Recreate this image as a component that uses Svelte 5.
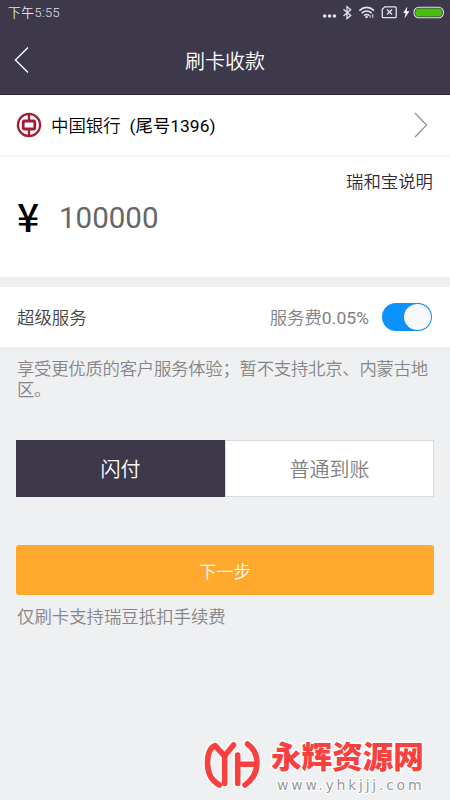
<script>
    const time = "下午5:55";
    const bank = { name: "中国银行", tail: "1396" };
    const payTypes = ["闪付", "普通到账"];

    let amount = $state("100000");
    let superService = $state(true);
    let currentType = $state(0);
</script>

<div class="page">
    <header>
        <div class="status-bar">
            <span class="time">{time}</span>
            <svg class="status-icons" width="128" height="24" viewBox="0 0 128 24" fill="none" stroke="#e4e3ec">
                <g fill="#e4e3ec" stroke="none">
                    <circle cx="5.7" cy="16" r="1.8" />
                    <circle cx="10.6" cy="16" r="1.8" />
                    <circle cx="15.4" cy="16" r="1.8" />
                </g>
                <path d="M24.5 9.3l7.2 6.3-3.7 3V6.6l3.7 3.1-7.2 6.2" stroke-width="1.3" />
                <path d="M40.3 10.7q7.4-6.5 14.8 0M42.7 13.2q5-4.4 10 0M45.1 15.6q2.6-2.2 5.2 0" stroke-width="1.6" />
                <circle cx="47.6" cy="17" r="1.2" fill="#e4e3ec" stroke="none" />
                <path d="M51.2 17.8v-2.6M53.8 14v3.8" stroke-width="1" />
                <path d="M65.8 6.8h10.4q1 0 1 1v8.9q0 1-1 1H64.3q-1 0-1-1V9.2z" stroke-width="1.3" />
                <path d="M68 9.6l5 5M73 9.6l-5 5" stroke-width="1.4" />
                <path d="M88.3 6.5l-4 6.6h2.4l-1.3 5.4 5.1-7.2h-2.8z" fill="#fff" stroke="none" />
                <rect x="95" y="7.2" width="29.4" height="10.6" rx="4.8" stroke-width="1.1" />
                <rect x="96.4" y="8.5" width="26.6" height="8" rx="3.6" fill="#48bd0b" stroke="none" />
            </svg>
        </div>
        <div class="title-bar">
            <svg class="back" width="16" height="28" viewBox="0 0 16 28" fill="none" stroke="#fff" stroke-width="1.3">
                <path d="M14 1.5L1.4 14 14 26.5" />
            </svg>
            <h1>刷卡收款</h1>
        </div>
    </header>

    <div class="bank-row">
        <svg width="26" height="26" viewBox="0 0 26 26" fill="none" stroke="#a51c35">
            <circle cx="13" cy="13" r="11.1" stroke-width="2.2" />
            <path d="M13 2v6.8M13 17.2V24" stroke-width="2.4" />
            <rect x="7.2" y="9" width="11.6" height="8" rx="1.5" stroke-width="2.8" />
        </svg>
        <span class="bank-name">{bank.name}</span>
        <span class="bank-tail">(尾号{bank.tail})</span>
        <svg class="arrow" width="14" height="26" viewBox="0 0 14 26" fill="none" stroke="#8b8b8b" stroke-width="1.1">
            <path d="M1 1l11.6 12L1 25" />
        </svg>
    </div>

    <div class="amount-box">
        <div class="explain">瑞和宝说明</div>
        <div class="amount">
            <span class="currency">¥</span>
            <span class="number">{amount}</span>
        </div>
    </div>

    <div class="service-row">
        <span class="service-name">超级服务</span>
        <span class="fee">服务费<span class="rate">0.05%</span></span>
        <button
            class="switch"
            class:on={superService}
            aria-label="超级服务"
            onclick={() => (superService = !superService)}
        >
            <span class="knob"></span>
        </button>
    </div>
    <p class="tip service-tip">享受更优质的客户服务体验；暂不支持北京、内蒙古地区。</p>

    <div class="pay-types">
        {#each payTypes as type, i}
            <button class:active={currentType === i} onclick={() => (currentType = i)}>
                {type}
            </button>
        {/each}
    </div>

    <button class="next">下一步</button>
    <p class="tip">仅刷卡支持瑞豆抵扣手续费</p>

    <div class="watermark">
        <svg width="60" height="58" viewBox="0 0 60 58" fill="none">
            {#each [{ color: "#fff", width: 8.5 }, { color: "#f8413f", width: 5.6 }] as line}
                <g stroke={line.color} stroke-width={line.width} stroke-linecap="round" stroke-linejoin="round">
                    <path d="M18.5 50C10 45.5 6.5 37.5 6.5 28 6.5 19 9.5 12.5 14 10.5L23.5 21 32.5 10" />
                    <path d="M23.7 21v27.5M36.7 20v28.5M37 29.2h18" />
                    <path d="M46.5 9C53 13.5 56.3 20.5 55.9 29 55.5 38 50.5 45.5 44 50" />
                </g>
            {/each}
        </svg>
        <div class="site">
            <div class="site-name">永辉资源网</div>
            <div class="site-url">www.yhkjjj.com</div>
        </div>
    </div>
</div>

<style>
    :global(body) {
        margin: 0;
    }

    .page {
        position: relative;
        display: flex;
        flex-direction: column;
        height: 800px;
        overflow: hidden;
        background: #eff0f2;
        font-family: Roboto, "Noto Sans CJK SC", sans-serif;
        font-size: 17.4px;
        font-weight: 350;
    }

    button {
        padding: 0;
        border: none;
        font: inherit;
    }

    header {
        box-sizing: border-box;
        height: 95px;
        background: #3d394b;
        border-bottom: 1px solid #2c2532;
        color: #fff;
    }

    .status-bar {
        display: flex;
        justify-content: space-between;
        height: 26px;
        padding: 0 3px 0 8px;
    }

    .time {
        font-size: 12.8px;
        letter-spacing: 0.4px;
        line-height: 26px;
        color: #e4e3ec;
    }

    .title-bar {
        display: grid;
        grid-template-columns: 40px 1fr 40px;
        align-items: center;
        height: 68px;
    }

    .back {
        margin-left: 14px;
    }

    h1 {
        margin: 0;
        text-align: center;
        font-size: 20px;
        font-weight: 350;
    }

    .bank-row {
        display: flex;
        align-items: center;
        box-sizing: border-box;
        height: 62px;
        padding: 0 22px 0 16px;
        background: #fff;
        border-bottom: 2px solid #f5f5f5;
        color: #000;
    }

    .bank-name {
        margin-left: 9px;
        padding-bottom: 2px;
    }

    .bank-tail {
        margin-left: 9px;
        padding-bottom: 2px;
        font-weight: 400;
    }

    .arrow {
        margin-left: auto;
    }

    .amount-box {
        box-sizing: border-box;
        height: 120px;
        padding: 12px 17px 0;
        background: #fff;
    }

    .explain {
        line-height: 26px;
        text-align: right;
        color: #2d2938;
    }

    .amount {
        display: flex;
        align-items: center;
        height: 46px;
    }

    .currency {
        width: 42px;
        padding-bottom: 6px;
        font-family: "Noto Sans CJK SC", sans-serif;
        font-size: 39px;
        line-height: 46px;
        font-weight: 500;
        color: #000;
    }

    .number {
        font-size: 29.5px;
        font-weight: 400;
        color: #666;
    }

    .service-row {
        display: flex;
        align-items: center;
        height: 60px;
        margin-top: 10px;
        padding: 0 18px 0 17px;
        background: #fff;
    }

    .service-name {
        flex: 1;
        padding-bottom: 2px;
        color: #444;
    }

    .fee {
        margin-right: 13px;
        padding-bottom: 2px;
        color: #808080;
    }

    .rate {
        font-weight: 400;
        letter-spacing: 0.1px;
    }

    .switch {
        display: flex;
        align-items: center;
        width: 50px;
        height: 28px;
        padding: 1px;
        border-radius: 14px;
        background: #ccc;
    }

    .switch.on {
        justify-content: flex-end;
        background: #0d91fb;
    }

    .knob {
        width: 27px;
        height: 26px;
        border-radius: 50%;
        background: #f8f8f8;
    }

    .tip {
        margin: 0 17px;
        line-height: 21px;
        color: #858585;
    }

    .service-tip {
        height: 81px;
        padding-top: 12px;
        margin-right: 14px;
        letter-spacing: -0.27px;
    }

    .pay-types {
        display: grid;
        grid-template-columns: 1fr 1fr;
        height: 57px;
        margin: 0 16px;
    }

    .pay-types button {
        border: 1px solid #d9dadd;
        background: #fff;
        color: #808080;
        font-size: 20px;
    }

    .pay-types .active {
        border-color: #3d394b;
        background: #3d394b;
        color: #fff;
    }

    .next {
        height: 50px;
        margin: 48px 16px 12px;
        border-radius: 3px;
        background: #ffa92e;
        color: #fff;
    }

    .watermark {
        position: absolute;
        left: 201px;
        top: 735px;
        display: flex;
    }

    .site {
        margin-left: 10px;
        padding-top: 5px;
        white-space: nowrap;
        paint-order: stroke fill;
    }

    .site-name {
        font-size: 30.6px;
        line-height: 36px;
        font-weight: 900;
        color: #f8413f;
        -webkit-text-stroke: 3px #fff;
    }

    .site-url {
        margin-left: 6px;
        font-family: "DejaVu Sans", sans-serif;
        font-size: 14px;
        font-weight: 400;
        line-height: 18px;
        letter-spacing: 2.75px;
        color: #999;
        -webkit-text-stroke: 2px #fff;
    }
</style>
